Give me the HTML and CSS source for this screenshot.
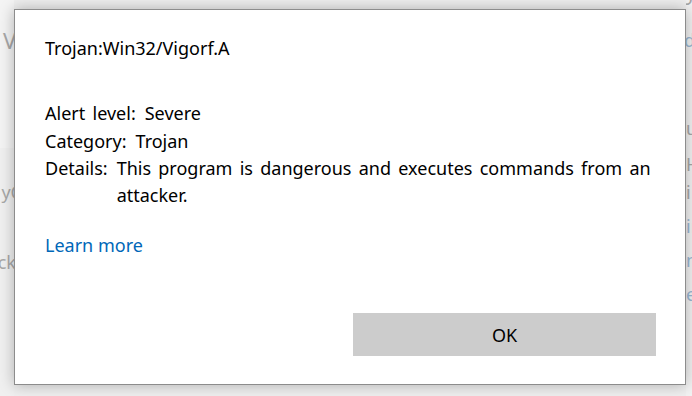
FILE: index.html
```html
<!DOCTYPE html>
<html lang="en">
<head>
<meta charset="utf-8">
<title>Trojan:Win32/Vigorf.A</title>
<link rel="stylesheet" href="styles.css">
</head>
<body>
<div class="backdrop">
  <div class="ghost-left">
    <span class="g g1">Vi</span>
    <span class="g g2">yC</span>
    <span class="g g3">ck</span>
  </div>
  <div class="ghost-mid"></div>
  <div class="ghost-right">
    <span class="g top">Help improve</span>
    <span class="g r1 blue">d</span>
    <span class="g r2">u</span>
    <span class="g r3">H</span>
    <span class="g r4">i</span>
    <span class="g r5 blue">ir</span>
    <span class="g r6 blue">n</span>
    <span class="g r7 blue">e</span>
  </div>
</div>

<div class="dialog" role="dialog">
  <div class="content">
    <div class="title">Trojan:Win32/Vigorf.A</div>
    <div class="rows">
      <div class="row"><span class="label">Alert level:</span><span class="value">Severe</span></div>
      <div class="row"><span class="label">Category:</span><span class="value">Trojan</span></div>
      <div class="row"><span class="label">Details:</span><span class="value">This program is dangerous and executes commands from an attacker.</span></div>
    </div>
    <a class="learn" href="#">Learn more</a>
  </div>
  <div class="footer">
    <button class="ok">OK</button>
  </div>
</div>
</body>
</html>
```

FILE: styles.css
```css
html, body {
  margin: 0;
  padding: 0;
}
body {
  width: 692px;
  height: 396px;
  overflow: hidden;
  position: relative;
  background: #efefef;
  font-family: "Noto Sans", "Open Sans", sans-serif;
  color: #000;
}

.backdrop {
  display: flex;
  height: 396px;
}
.ghost-left {
  width: 14px;
  overflow: hidden;
  display: flex;
  flex-direction: column;
  align-items: flex-end;
  background: linear-gradient(#f4f4f4 0, #f4f4f4 148px, #f0f0f0 148px);
}
.ghost-mid {
  flex: 1;
}
.ghost-right {
  width: 6px;
  overflow: hidden;
  display: flex;
  flex-direction: column;
  align-items: flex-start;
  background: #f2f2f2;
}
.g {
  display: block;
  white-space: nowrap;
  color: #a8a8a8;
  font-size: 18px;
  line-height: 24px;
}
.g.blue { color: #9ab8d4; }
.g1 { margin-top: 28px; margin-right: -8px; font-size: 22px; }
.g2 { margin-top: 128px; margin-right: -8px; }
.g3 { margin-top: 46px; margin-right: -2px; }
.ghost-right .top { margin-top: -14px; margin-left: -98px; font-size: 20px; }
.r1 { margin-top: 18px; margin-left: -2px; }
.r2 { margin-top: 64px; }
.r3 { margin-top: 12px; }
.r4 { margin-top: 4px; }
.r5 { margin-top: 10px; }
.r6 { margin-top: 10px; }
.r7 { margin-top: 10px; }

.dialog {
  position: absolute;
  left: 14px;
  top: 9px;
  width: 670px;
  height: 374px;
  background: #fff;
  border: 1px solid #8c8c8c;
  box-shadow: 0 0 14px rgba(0, 0, 0, 0.28);
  display: flex;
  flex-direction: column;
}
.content {
  padding: 25px 28px 0 30px;
  font-size: 18px;
  line-height: 27.3px;
}
.title {
  margin-bottom: 38px;
}
.rows {
  display: flex;
  flex-direction: column;
  word-spacing: 2.6px;
}
.row {
  display: flex;
  gap: 9px;
}
.label {
  flex: none;
}
.learn {
  display: inline-block;
  margin-top: 23px;
  color: #0067b8;
  text-decoration: none;
}
.footer {
  margin-top: auto;
  display: flex;
  justify-content: flex-end;
  padding: 0 29px 28px 0;
}
.ok {
  width: 303px;
  height: 43px;
  border: none;
  background: #cccccc;
  font-family: inherit;
  font-size: 18px;
  color: #000;
  padding: 0;
}
```
